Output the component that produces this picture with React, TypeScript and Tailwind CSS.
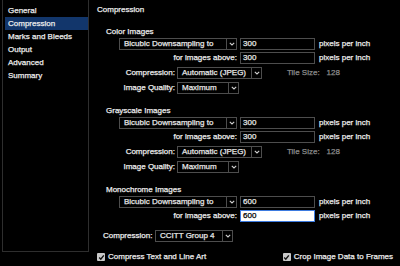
const font = { fontFamily: '"Liberation Sans", Arial, sans-serif' };

function Chevron() {
  return (
    <svg width="6" height="4" viewBox="0 0 6 4" fill="none">
      <path d="M0.8 0.8 L3 3 L5.2 0.8" stroke="#d0d0d0" strokeWidth="1.1" />
    </svg>
  );
}

function Select({ text, w }: { text: string; w: string }) {
  return (
    <div className={`flex h-[12px] border border-[#4d4d4d] bg-black ${w}`}>
      <span className="flex-1 truncate pl-[4px] leading-[10px] text-[#e8e8e8]">{text}</span>
      <span className="flex w-[10px] items-center justify-center border-l border-[#4d4d4d]">
        <Chevron />
      </span>
    </div>
  );
}

function Input({ value, active }: { value: string; active?: boolean }) {
  return (
    <div
      className={
        active
          ? "h-[12px] w-[75px] border border-[#3d7be0] bg-white pl-[2px] leading-[10px] text-black"
          : "h-[12px] w-[75px] border border-[#4d4d4d] bg-black pl-[2px] leading-[10px] text-[#e8e8e8]"
      }
    >
      {value}
    </div>
  );
}

function Check() {
  return (
    <span className="flex h-[8px] w-[8px] items-center justify-center rounded-[1px] bg-[#c8c8c8]">
      <svg width="7" height="7" viewBox="0 0 7 7" fill="none">
        <path d="M1.2 3.6 L2.8 5.2 L5.8 1.4" stroke="#111" strokeWidth="1.4" />
      </svg>
    </span>
  );
}

function Group({ title, value, jpeg }: { title: string; value: string; jpeg?: boolean }) {
  return (
    <div className="flex flex-col">
      <div className="h-[10px] pl-[9px] leading-[10px]">{title}</div>
      <div className="mt-[1px] flex items-center pl-[22px]">
        <Select text="Bicubic Downsampling to" w="w-[118px]" />
        <div className="ml-[3px]"><Input value={value} /></div>
        <span className="ml-[4px]">pixels per inch</span>
      </div>
      <div className="mt-[2px] flex items-center pl-[22px]">
        <span className="w-[118px] text-right">for images above:</span>
        <div className="ml-[3px]"><Input value={value} active={!jpeg && value === "600"} /></div>
        <span className="ml-[4px]">pixels per inch</span>
      </div>
      {jpeg && (
        <>
          <div className="mt-[3px] flex items-center pl-[22px]">
            <span className="w-[56px] text-right">Compression:</span>
            <div className="ml-[2px]"><Select text="Automatic (JPEG)" w="w-[85px]" /></div>
            <span className="ml-[25px] text-[#8c8c8c]">Tile Size:</span>
            <span className="ml-[7px] text-[#8c8c8c]">128</span>
          </div>
          <div className="mt-[3px] flex items-center pl-[22px]">
            <span className="w-[56px] text-right">Image Quality:</span>
            <div className="ml-[2px]"><Select text="Maximum" w="w-[62px]" /></div>
          </div>
        </>
      )}
    </div>
  );
}

const nav = ["General", "Compression", "Marks and Bleeds", "Output", "Advanced", "Summary"];

export default function App() {
  return (
    <div
      className="flex h-[266px] w-[400px] bg-black text-[8px] text-[#ececec] [-webkit-text-stroke:0.25px_currentColor]"
      style={font}
    >
      <div className="h-[252px] w-[89px] pl-[2px]">
        <div className="flex h-full flex-col border-b border-l border-r border-[#2e2e2e] pl-[2px] pt-[4px]">
          {nav.map((n) => (
            <div
              key={n}
              className={
                n === "Compression"
                  ? "h-[13px] bg-[#12366b] pl-[3px] leading-[13px]"
                  : "h-[13px] pl-[3px] leading-[13px]"
              }
            >
              {n}
            </div>
          ))}
        </div>
      </div>
      <div className="flex flex-1 flex-col pl-[8px]">
        <div className="flex h-[20px] items-center">Compression</div>
        <div className="mt-[7px] flex flex-col gap-[12px]">
          <Group title="Color Images" value="300" jpeg />
          <Group title="Grayscale Images" value="300" jpeg />
          <Group title="Monochrome Images" value="600" />
        </div>
        <div className="mt-[8px] flex items-center pl-[6px]">
          <span className="w-[49px] text-right">Compression:</span>
          <div className="ml-[3px]"><Select text="CCITT Group 4" w="w-[78px]" /></div>
        </div>
        <div className="mt-[9px] flex h-[12px] items-center pr-[7px]">
          <Check />
          <span className="ml-[3px]">Compress Text and Line Art</span>
          <span className="ml-auto"><Check /></span>
          <span className="ml-[3px]">Crop Image Data to Frames</span>
        </div>
      </div>
    </div>
  );
}
